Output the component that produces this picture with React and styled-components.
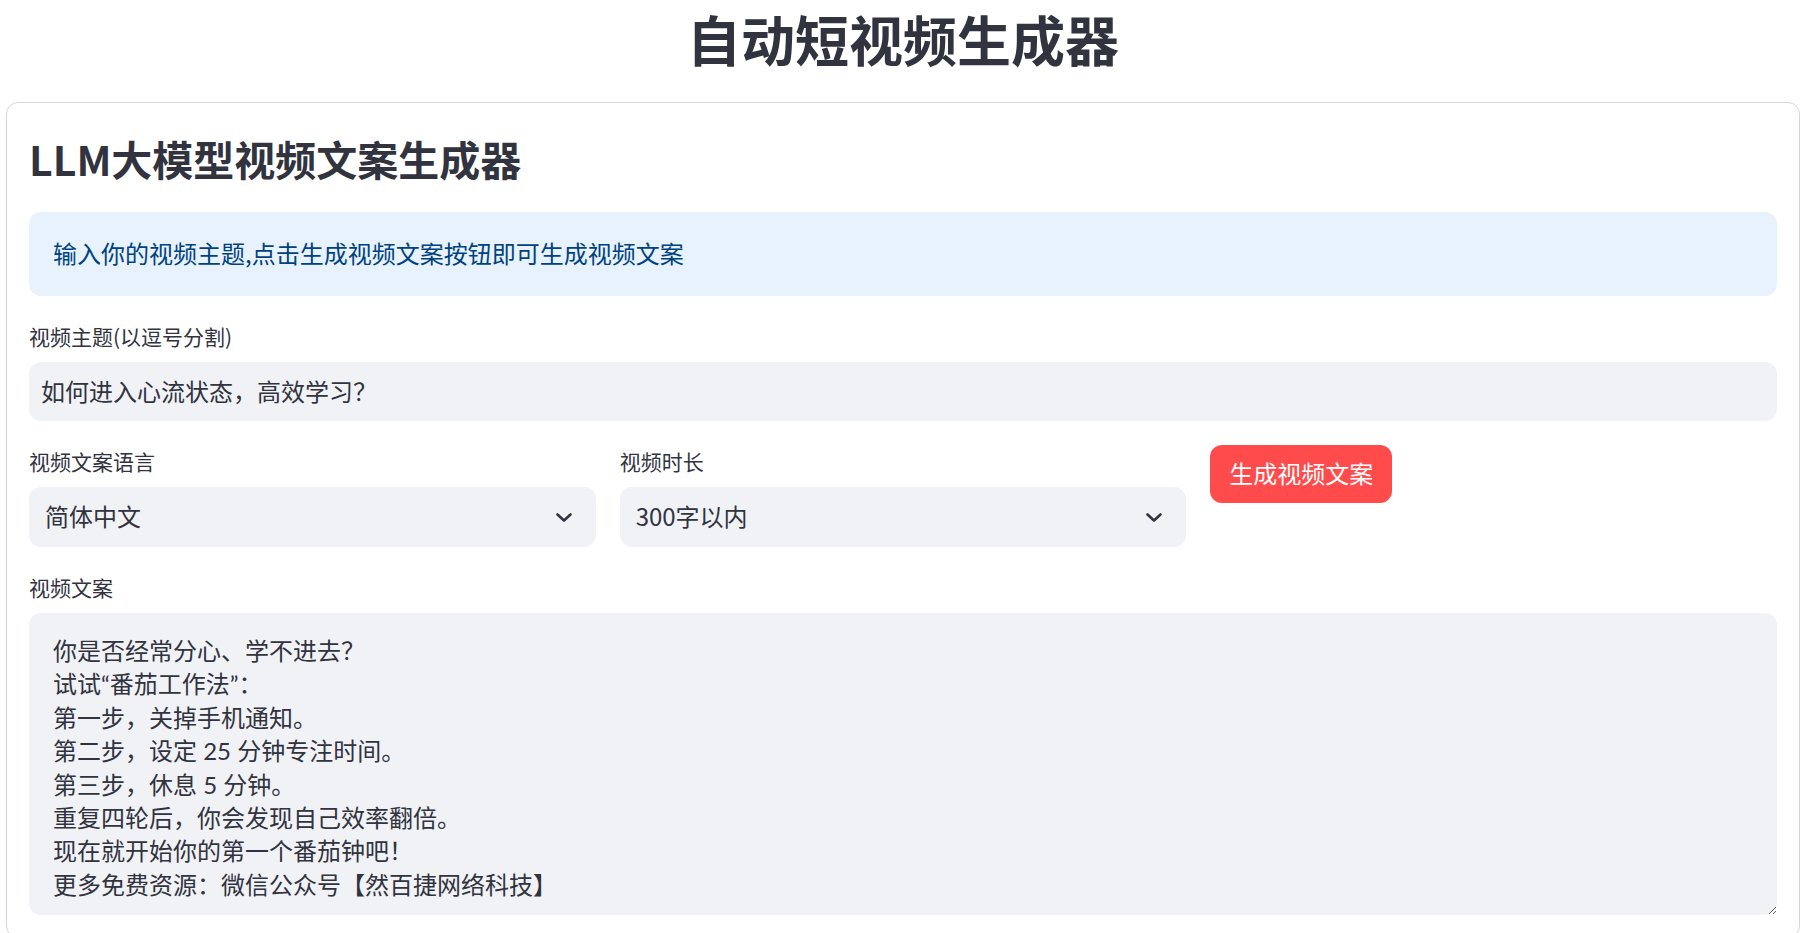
import React from 'react';
import styled, { createGlobalStyle } from 'styled-components';

const script = `你是否经常分心、学不进去？
试试“番茄工作法”：
第一步，关掉手机通知。
第二步，设定 25 分钟专注时间。
第三步，休息 5 分钟。
重复四轮后，你会发现自己效率翻倍。
现在就开始你的第一个番茄钟吧！
更多免费资源：微信公众号【然百捷网络科技】`;

const Chevron = () => (
    <svg width="18" height="11" viewBox="0 0 18 11">
        <path d="M2.5 2.5 L9 8.5 L15.5 2.5" fill="none" stroke="#31333f" strokeWidth="2.6" strokeLinecap="round" strokeLinejoin="round" />
    </svg>
);

const Select = ({ value }) => (
    <SelectBox>
        <span>{value}</span>
        <Chevron />
    </SelectBox>
);

export default function App() {
    return (
        <>
            <GlobalStyle />
            <Title>自动短视频生成器</Title>
            <Card>
                <Subheader>LLM大模型视频文案生成器</Subheader>
                <Info>输入你的视频主题,点击生成视频文案按钮即可生成视频文案</Info>
                <Field>
                    <Label>视频主题(以逗号分割)</Label>
                    <Input defaultValue="如何进入心流状态，高效学习？" />
                </Field>
                <Columns>
                    <Field>
                        <Label>视频文案语言</Label>
                        <Select value="简体中文" />
                    </Field>
                    <Field>
                        <Label>视频时长</Label>
                        <Select value="300字以内" />
                    </Field>
                    <div>
                        <Button>生成视频文案</Button>
                    </div>
                </Columns>
                <Field>
                    <Label>视频文案</Label>
                    <TextArea defaultValue={script} />
                </Field>
            </Card>
        </>
    );
}

//-------------------------------- STYLING --------------------------------

const GlobalStyle = createGlobalStyle`
    html, body {
        margin: 0;
        background: #ffffff;
        font-family: "Noto Sans CJK SC", "Noto Sans", sans-serif;
        color: #31333f;
    }
    * { box-sizing: border-box; }
`;

const Title = styled.h1`
    margin: 0;
    font-size: 54px;
    line-height: 78px;
    font-weight: 700;
    text-align: center;
    color: #31333f;
`;

const Card = styled.div`
    margin: 24px 6px 0;
    border: 1px solid #d6d6d9;
    border-radius: 12px;
    padding: 22px;
    display: flex;
    flex-direction: column;
    gap: 24px;
`;

const Subheader = styled.h3`
    margin: 0;
    padding-top: 3px;
    font-size: 41px;
    line-height: 60px;
    font-weight: 700;
    color: #31333f;
`;

const Info = styled.div`
    height: 84px;
    display: flex;
    align-items: center;
    padding: 0 24px 4px;
    border-radius: 12px;
    background: #e8f2fc;
    color: #004280;
    font-size: 24px;
`;

const Field = styled.div`
    display: flex;
    flex-direction: column;
`;

const Label = styled.label`
    padding-top: 1px;
    margin-bottom: 11px;
    font-size: 21px;
    line-height: 30px;
    color: #31333f;
`;

const Input = styled.input`
    height: 59px;
    border: none;
    outline: none;
    border-radius: 12px;
    background: #f0f2f6;
    padding: 0 12px 3px;
    font-family: inherit;
    font-size: 24px;
    color: #31333f;
`;

const Columns = styled.div`
    display: grid;
    grid-template-columns: repeat(3, 1fr);
    gap: 24px;
    align-items: start;
`;

const SelectBox = styled.div`
    height: 60px;
    display: flex;
    align-items: center;
    justify-content: space-between;
    padding: 0 23px 4px 16px;
    border-radius: 12px;
    background: #f0f2f6;
    font-size: 24px;
    color: #31333f;

    svg {
        margin-top: 4px;
    }
`;

const Button = styled.button`
    height: 58px;
    padding: 0 19px 3px;
    border: none;
    border-radius: 12px;
    background: #ff4b4b;
    color: #ffffff;
    font-family: inherit;
    font-size: 24px;
    cursor: pointer;
`;

const TextArea = styled.textarea`
    height: 302px;
    border: none;
    outline: none;
    border-radius: 12px;
    background: #f0f2f6;
    padding: 21px 24px 10px;
    font-family: "Lato", "Noto Sans CJK SC", sans-serif;
    font-size: 24px;
    line-height: 33.4px;
    color: #31333f;
    resize: vertical;
    overflow: hidden;
`;
